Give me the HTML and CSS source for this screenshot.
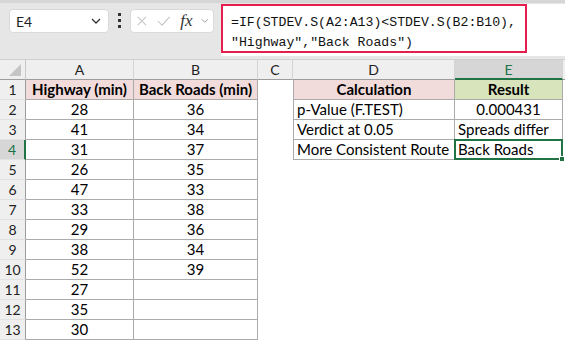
FILE: index.html
```html
<!DOCTYPE html>
<html lang="en">
<head>
  <meta charset="UTF-8" />
  <title>Route Spread</title>
  <link rel="stylesheet" href="styles.css">
</head>
<body>
  <div class="topline"></div>
  <div class="toolbar">
    <div class="namebox">
      <span class="ref">E4</span>
      <svg class="chev" width="10" height="6" viewBox="0 0 10 6"><path d="M1 1l4 4 4-4" fill="none" stroke="#333" stroke-width="1.3"/></svg>
    </div>
    <div class="dots"><i></i><i></i><i></i></div>
    <div class="fxbox">
      <svg width="14" height="14" viewBox="0 0 14 14"><path d="M2 2l10 10M12 2L2 12" stroke="#c4c4c4" stroke-width="1.2"/></svg>
      <svg width="16" height="14" viewBox="0 0 16 14"><path d="M1 7l5 5L15 2" fill="none" stroke="#c4c4c4" stroke-width="1.2"/></svg>
      <span class="fx">fx</span>
      <svg width="9" height="6" viewBox="0 0 9 6"><path d="M1 1l3.5 3.5L8 1" fill="none" stroke="#999" stroke-width="1.1"/></svg>
    </div>
    <div class="formula">
      <div class="formula-text">=IF(STDEV.S(A2:A13)&lt;STDEV.S(B2:B10),<br>"Highway","Back Roads")</div>
    </div>
  </div>

  <div class="sheet">
    <div class="corner"><span class="tri"></span></div>
    <div class="colhead">A</div>
    <div class="colhead">B</div>
    <div class="colhead">C</div>
    <div class="colhead">D</div>
    <div class="colhead active">E</div>
    <div class="colhead last"></div>

    <div class="rowhead">1</div>
    <div class="cell b hdr pink">Highway (min)</div>
    <div class="cell b hdr pink">Back Roads (min)</div>
    <div class="cell"></div>
    <div class="cell b bl hdr pink">Calculation</div>
    <div class="cell b hdr green">Result</div>
    <div class="cell"></div>

    <div class="rowhead">2</div>
    <div class="cell b c">28</div>
    <div class="cell b c">36</div>
    <div class="cell"></div>
    <div class="cell b bl">p-Value (F.TEST)</div>
    <div class="cell b c">0.000431</div>
    <div class="cell"></div>

    <div class="rowhead">3</div>
    <div class="cell b c">41</div>
    <div class="cell b c">34</div>
    <div class="cell"></div>
    <div class="cell b bl">Verdict at 0.05</div>
    <div class="cell b">Spreads differ</div>
    <div class="cell"></div>

    <div class="rowhead active">4</div>
    <div class="cell b c">31</div>
    <div class="cell b c">37</div>
    <div class="cell"></div>
    <div class="cell b bl">More Consistent Route</div>
    <div class="cell b sel">Back Roads<span class="handle"></span></div>
    <div class="cell"></div>

    <div class="rowhead">5</div>
    <div class="cell b c">26</div>
    <div class="cell b c">35</div>
    <div class="cell"></div><div class="cell"></div><div class="cell"></div><div class="cell"></div>

    <div class="rowhead">6</div>
    <div class="cell b c">47</div>
    <div class="cell b c">33</div>
    <div class="cell"></div><div class="cell"></div><div class="cell"></div><div class="cell"></div>

    <div class="rowhead">7</div>
    <div class="cell b c">33</div>
    <div class="cell b c">38</div>
    <div class="cell"></div><div class="cell"></div><div class="cell"></div><div class="cell"></div>

    <div class="rowhead">8</div>
    <div class="cell b c">29</div>
    <div class="cell b c">36</div>
    <div class="cell"></div><div class="cell"></div><div class="cell"></div><div class="cell"></div>

    <div class="rowhead">9</div>
    <div class="cell b c">38</div>
    <div class="cell b c">34</div>
    <div class="cell"></div><div class="cell"></div><div class="cell"></div><div class="cell"></div>

    <div class="rowhead">10</div>
    <div class="cell b c">52</div>
    <div class="cell b c">39</div>
    <div class="cell"></div><div class="cell"></div><div class="cell"></div><div class="cell"></div>

    <div class="rowhead">11</div>
    <div class="cell b c">27</div>
    <div class="cell b"></div>
    <div class="cell"></div><div class="cell"></div><div class="cell"></div><div class="cell"></div>

    <div class="rowhead">12</div>
    <div class="cell b c">35</div>
    <div class="cell b"></div>
    <div class="cell"></div><div class="cell"></div><div class="cell"></div><div class="cell"></div>

    <div class="rowhead">13</div>
    <div class="cell b c">30</div>
    <div class="cell b"></div>
    <div class="cell"></div><div class="cell"></div><div class="cell"></div><div class="cell"></div>
  </div>
</body>
</html>
```

FILE: styles.css
```css
* {
  margin: 0;
  padding: 0;
  box-sizing: border-box;
}
body {
  width: 565px;
  height: 342px;
  overflow: hidden;
  background: #fff;
  font-family: Lato, "Open Sans", sans-serif;
  color: #000;
}
.topline {
  height: 3px;
  background: #d6d6d6;
}
.toolbar {
  height: 57px;
  background: #e6e6e6;
  display: flex;
  align-items: flex-start;
  border-bottom: 1px solid #d0d0d0;
}
.namebox {
  margin: 6px 0 0 9px;
  width: 100px;
  height: 24px;
  background: #fff;
  border-radius: 4px;
  border: 1px solid #dadada;
  display: flex;
  align-items: center;
  justify-content: space-between;
  padding: 0 7px 0 6px;
  font-size: 14px;
  color: #1f1f1f;
}
.dots {
  margin: 10px 0 0 9px;
  width: 3px;
  display: flex;
  flex-direction: column;
  gap: 3px;
}
.dots i {
  display: block;
  width: 3px;
  height: 3px;
  background: #333;
}
.fxbox {
  margin: 6px 0 0 9px;
  width: 84px;
  height: 24px;
  background: #fff;
  border-radius: 4px;
  border: 1px solid #dadada;
  display: flex;
  align-items: center;
  gap: 9px;
  padding: 0 4px 0 5px;
}
.fx {
  font-family: "Liberation Serif", serif;
  font-style: italic;
  font-size: 17px;
  color: #333;
  margin-left: 1px;
}
.formula {
  margin: 1px 0 0 7px;
  flex: 1;
  height: 52px;
  background: #fff;
  position: relative;
}
.formula-text {
  width: 306px;
  height: 49px;
  border: 2px solid #e61e4d;
  padding: 7px 0 0 8px;
  font-family: "Liberation Mono", monospace;
  font-size: 13.2px;
  line-height: 20px;
  color: #111;
}
.sheet {
  display: grid;
  grid-template-columns: 26px 108px 124px 35px 162px 108px 1fr;
  grid-template-rows: 20px;
  grid-auto-rows: 20px;
}
.corner {
  background: #efefef;
  border-right: 1px solid #c8c8c8;
  border-bottom: 1px solid #9c9c9c;
  position: relative;
}
.tri {
  position: absolute;
  right: 4px;
  bottom: 3px;
  width: 0;
  height: 0;
  border-left: 12px solid transparent;
  border-bottom: 12px solid #c4c4c4;
}
.colhead {
  background: #efefef;
  border-right: 1px solid #d4d4d4;
  border-bottom: 1px solid #9c9c9c;
  text-align: center;
  font-size: 14px;
  line-height: 19px;
  color: #222;
}
.colhead.active {
  background: #d6d6d6;
  color: #217346;
  border-bottom: 2px solid #217346;
}
.colhead.last {
  border-right: none;
}
.rowhead {
  background: #efefef;
  border-right: 1px solid #9c9c9c;
  border-bottom: 1px solid #e2e2e2;
  text-align: center;
  font-size: 14px;
  line-height: 20px;
  color: #222;
}
.rowhead.active {
  background: #d6d6d6;
  color: #217346;
  border-right: 2px solid #217346;
}
.cell {
  font-size: 15px;
  line-height: 19px;
  padding: 0 3px;
  white-space: nowrap;
  overflow: visible;
  position: relative;
}
.b {
  border-right: 1px solid #ababab;
  border-bottom: 1px solid #ababab;
}
.bl {
  border-left: 1px solid #ababab;
}
.c, .hdr {
  text-align: center;
}
.hdr {
  font-weight: bold;
}
.pink {
  background: #f2dcdb;
}
.green {
  background: #d8e4bc;
}
.sel {
  border: 2px solid #217346;
  margin: -1px 0 0 -1px;
  line-height: 17px;
  padding-left: 2px;
  width: 109px;
  height: 21px;
}
.handle {
  position: absolute;
  right: -4px;
  bottom: -4px;
  width: 6px;
  height: 6px;
  background: #217346;
  border: 1px solid #fff;
}
```
